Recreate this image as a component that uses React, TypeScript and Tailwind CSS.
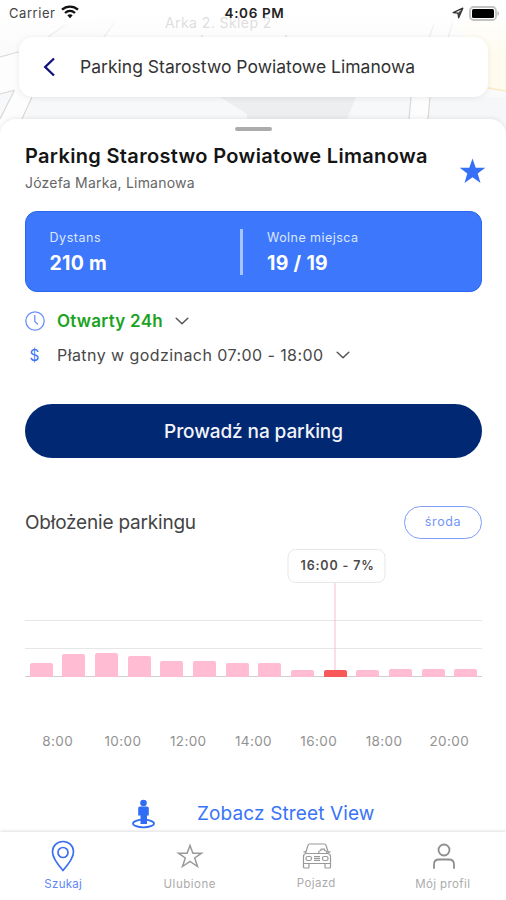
import React from "react";

const bars = [14, 23, 24.5, 21, 16, 16, 14.5, 14.5, 7, 7, 7.5, 8, 8, 8];
const hours = ["8:00", "10:00", "12:00", "14:00", "16:00", "18:00", "20:00"];
const ACTIVE_BAR = 9;

function MapBackdrop() {
  return (
    <svg className="absolute inset-0 h-full w-full" viewBox="0 0 506 140" preserveAspectRatio="none">
      <defs>
        <linearGradient id="fade" x1="0" y1="0" x2="0" y2="1">
          <stop offset="0" stopColor="#fff" stopOpacity="1" />
          <stop offset="0.14" stopColor="#fff" stopOpacity="0.85" />
          <stop offset="0.4" stopColor="#fff" stopOpacity="0" />
        </linearGradient>
      </defs>
      <rect width="506" height="140" fill="#fafafa" />
      <path d="M0 57L45 40L70 22L120 18L105 37L60 60L0 90Z" fill="#f7f7f7" />
      <path d="M0 57L22 51V90L0 95Z" fill="#fdfdfd" />
      <path d="M15 90L32 97L23 140H0V119Z" fill="#fdfdfd" />
      <path d="M0 94L15 90L0 119Z" fill="#f6f8f9" />
      <path d="M32 97H220L247 114V140H18Z" fill="#f6f8fa" />
      <path d="M220 97H356L347 122H247V114Z" fill="#eceef0" />
      <path d="M356 97H411L409 140H342L347 119Z" fill="#f6f8fa" />
      <path d="M430 97H506V140H426Z" fill="#f5f7f9" />
      <path d="M455 20H506V91L486 89Z" fill="#fffbee" />
      <path d="M488 88L506 91" stroke="#fbe9c4" strokeWidth="1.5" />
      <path d="M411 97H430L428 122H409Z" fill="#fdfdfd" />
      <path d="M0 57L22 51M48 37L65 25M104 37L115 22M0 94L15 90M14 91L0 119M32 97L22 119" stroke="#d8d8d8" strokeWidth="1.2" fill="none" />
      <path d="M411 97L409 119M430 97L428 119M434 24L429 38M453 22L448 38" stroke="#d8d8da" strokeWidth="1.2" fill="none" />
      <path d="M201 36H203M285 36H287" stroke="#aaa" strokeWidth="1" />
      <rect width="506" height="140" fill="url(#fade)" />
    </svg>
  );
}

function StatusBar() {
  return (
    <div className="relative flex h-[27px] items-center justify-between pr-[6px] pl-[9px]">
      <div className="flex w-[160px] items-center gap-[6px]">
        <span className="text-[13px] tracking-[0.55px] text-[#444]">Carrier</span>
        <svg className="-mt-[3px] h-[14px] w-[18px]" viewBox="0 0 18 14" fill="none" stroke="#111" strokeWidth="2.300">
          <path d="M1 4.700C5.500 .500 12.500 .500 17 4.700" />
          <path d="M4 8C7 5.300 11 5.300 14 8" />
          <path d="M6.300 10.300C8 9 10 9 11.700 10.300L9 13.300Z" fill="#111" stroke="none" />
        </svg>
      </div>
      <span className="text-[13.500px] font-semibold tracking-[0.65px] text-[#222]">4:06 PM</span>
      <div className="flex w-[160px] items-center justify-end gap-[5px]">
        <svg className="-mt-[2px] h-[12px] w-[12px]" viewBox="0 0 12 12">
          <path d="M1.200 5.600L10.800 1.200L6.700 10.800L5.900 6.200Z" fill="none" stroke="#333" strokeWidth="1.300" strokeLinejoin="round" />
          <path d="M6 6L10.800 1.200L6.700 10.800Z" fill="#444" />
        </svg>
        <svg className="-mt-[1px] h-[15px] w-[31px]" viewBox="0 0 31 15">
          <rect x="1" y="1" width="26" height="13" rx="3.500" fill="#fff" stroke="#c2c2c2" strokeWidth="1.800" />
          <rect x="3" y="3" width="22" height="9" rx="1.500" fill="#000" />
          <path d="M28.500 5V10C30.500 9 30.500 6 28.500 5Z" fill="#b5b5b5" />
        </svg>
      </div>
    </div>
  );
}

function Chevron({ className }: { className: string }) {
  return (
    <svg className={className} viewBox="0 0 14 8" fill="none" stroke="#555" strokeWidth="1.500" strokeLinecap="round" strokeLinejoin="round">
      <path d="M1.200 1.200L7 6.700L12.800 1.200" />
    </svg>
  );
}

function Chart() {
  return (
    <div className="mt-[81px]">
      <div className="relative h-[57px]">
        <div className="absolute inset-x-0 top-0 h-px bg-[#e6e6e6]" />
        <div className="absolute inset-x-0 top-[28px] h-px bg-[#e6e6e6]" />
        <div className="absolute inset-x-0 bottom-0 h-px bg-[#cfcfcf]" />
        <div className="relative flex h-full items-end">
          {bars.map((height, i) => (
            <div key={i} className="relative flex flex-1 items-end justify-center">
              {i === ACTIVE_BAR && (
                <div className="absolute bottom-0 left-1/2 flex -translate-x-1/2 flex-col items-center">
                  <div className="ml-[3px] flex h-[34px] w-[98px] items-center justify-center rounded-[8px] border-[1.5px] border-[#e7e7e7] bg-white pt-px pl-[2px] text-[12.5px] font-semibold tracking-[0.85px] whitespace-nowrap text-[#4a4a4a]">
                    16:00 - 7%
                  </div>
                  <div className="h-[94px] w-[1.5px] bg-[#fbbdd0]" />
                </div>
              )}
              <div
                className={`relative w-[23px] rounded-t-[2px] ${i === ACTIVE_BAR ? "bg-[#f9585b]" : "bg-[#ffbcd2]"}`}
                style={{ height }}
              />
            </div>
          ))}
        </div>
      </div>
      <div className="mt-[54px] flex h-[20px] items-center">
        {hours.map((hour) => (
          <span key={hour} className="flex-1 text-center text-[13.500px] tracking-[0.4px] text-[#929292]">{hour}</span>
        ))}
      </div>
    </div>
  );
}

function PinIcon() {
  return (
    <svg className="h-[32px] w-[26px]" viewBox="0 0 26 32" fill="none" stroke="#3c70f2" strokeWidth="1.700">
      <path d="M13 30.500C9 26 2.500 18 2.500 11.800C2.500 5.900 7.200 1.500 13 1.500S23.500 5.900 23.500 11.800C23.500 18 17 26 13 30.500Z" strokeLinejoin="round" />
      <circle cx="13" cy="12.500" r="5" />
    </svg>
  );
}

function StarIcon() {
  return (
    <svg className="h-[26px] w-[28px]" viewBox="0 0 28 26" fill="none" stroke="#999" strokeWidth="1.500">
      <path d="M14 2.500L16.900 10.200H25.500L18.700 15L21.500 23.500L14 18.400L6.500 23.500L9.300 15L2.500 10.200H11.100Z" />
    </svg>
  );
}

function CarIcon() {
  return (
    <svg className="ml-[2px] h-[28px] w-[30px]" viewBox="0 0 30 28" fill="none" stroke="#999" strokeWidth="1.200" strokeLinejoin="round">
      <path d="M3.500 11.500L6 3.200Q6.400 2 7.600 2H22.400Q23.600 2 24 3.200L26.500 11.500" />
      <path d="M1.500 21.500V14.500Q1.500 11.500 4.500 11.500H25.500Q28.500 11.500 28.500 14.500V21.500Z" />
      <path d="M1.500 9.800H4M26 9.800H28.500M1.500 21.500V25Q1.500 26 2.500 26H6Q7 26 7 25V21.500M23 21.500V25Q23 26 24 26H27.500Q28.500 26 28.500 25V21.500" />
      <rect x="4" y="14.500" width="5.500" height="4" rx="1.800" />
      <rect x="20.500" y="14.500" width="5.500" height="4" rx="1.800" />
      <path d="M12 14.700H18M12 16.500H18M12 18.300H18M16.500 11.500C16.500 9.500 18 8.500 19 8.500V7.200H22.500V8.500C24 8.500 25 9.500 25 11.500" />
    </svg>
  );
}

function ProfileIcon() {
  return (
    <svg className="ml-[2px] h-[28px] w-[26px]" viewBox="0 0 26 28" fill="none" stroke="#8e8e8e" strokeWidth="1.800" strokeLinecap="round">
      <circle cx="13" cy="8" r="5.500" />
      <path d="M3 26V22.500Q3 17.500 8 17.500H18Q23 17.500 23 22.500V26" />
    </svg>
  );
}

const tabs = [
  { label: "Szukaj", icon: <PinIcon />, style: "text-[#5d86f8] tracking-[0.3px]" },
  { label: "Ulubione", icon: <StarIcon />, style: "text-[#ababab] tracking-[0.5px]" },
  { label: "Pojazd", icon: <CarIcon />, style: "relative -top-px text-[#ababab] tracking-[0.4px]" },
  { label: "Mój profil", icon: <ProfileIcon />, style: "text-[#ababab] tracking-[0.4px]" },
];

export default function App() {
  return (
    <div className="relative flex h-[900px] w-[506px] flex-col overflow-hidden bg-white font-['Inter','Liberation_Sans',sans-serif]">
      <div className="absolute inset-x-0 top-0 h-[140px]">
        <MapBackdrop />
        <span className="absolute top-[12px] left-[165px] text-[14px] tracking-[0.42px] whitespace-nowrap text-[#dedede]">Arka 2. Sklep 2</span>
      </div>
      <StatusBar />
      <header className="relative mt-[10px] mr-[18px] ml-[19px] flex h-[60px] shrink-0 items-center rounded-[14px] bg-white shadow-[0_1px_6px_rgba(0,0,0,0.08)]">
        <svg className="ml-[24px] h-[20px] w-[13px]" viewBox="0 0 13 20" fill="none" stroke="#10107c" strokeWidth="2.300">
          <path d="M11 1.500L2.200 10L11 18.500" />
        </svg>
        <span className="ml-[24px] text-[17.500px] tracking-[0.02px] whitespace-nowrap text-[#333]">Parking Starostwo Powiatowe Limanowa</span>
      </header>

      <main className="relative mt-[22px] flex h-[713px] shrink-0 flex-col rounded-t-[16px] bg-white pr-[24px] pl-[25px] shadow-[0_-1px_4px_rgba(0,0,0,0.08)]">
        <div className="mt-[8px] h-[4px] w-[37px] shrink-0 self-center rounded-full bg-[#acacac]" />
        <div className="mt-[13px] flex h-[50px] shrink-0 justify-between">
          <div>
            <h1 className="h-[24px] text-[20px] leading-[24px] font-semibold tracking-[0.33px] whitespace-nowrap text-[#151515]">Parking Starostwo Powiatowe Limanowa</h1>
            <p className="mt-[5px] h-[20px] text-[14px] leading-[20px] tracking-[0.2px] text-[#666]">Józefa Marka, Limanowa</p>
          </div>
          <svg className="mt-[14px] mr-[-4px] h-[26px] w-[27px]" viewBox="0 0 27 26" fill="#3570f6">
            <path d="M13.500 0.500L16.700 9.700H26.300L18.700 15.500L21.500 25L13.500 19.300L5.500 25L8.300 15.500L0.700 9.700H10.300Z" />
          </svg>
        </div>

        <section className="mt-[17px] flex h-[81px] shrink-0 items-center rounded-[12px] border border-[#2b66f3] bg-[#3d77fb] pl-[23.500px] text-white">
          <div className="w-[190.500px] pt-px">
            <div className="text-[12.500px] leading-[18px] tracking-[0.55px] text-[#dce7ff]">Dystans</div>
            <div className="mt-[3px] text-[19.500px] leading-[26px] font-bold tracking-[0.25px]">210 m</div>
          </div>
          <div className="h-[46px] w-[3px] bg-[#a9c3fd]" />
          <div className="ml-[24px] pt-px">
            <div className="text-[12.500px] leading-[18px] tracking-[0.45px] text-[#dce7ff]">Wolne miejsca</div>
            <div className="mt-[3px] text-[19.500px] leading-[26px] font-bold tracking-[0.3px]">19 / 19</div>
          </div>
        </section>

        <div className="mt-[17px] flex h-[24px] shrink-0 items-center">
          <svg className="h-[20px] w-[20px]" viewBox="0 0 20 20" fill="none" stroke="#6b93f8" strokeWidth="1.300">
            <circle cx="10" cy="10" r="9.200" />
            <path d="M9.800 4V10.500L13 13.500" />
          </svg>
          <span className="ml-[12px] pt-px text-[17px] font-semibold tracking-[0.25px] text-[#1ba31f]">Otwarty 24h</span>
          <Chevron className="ml-[12px] h-[8px] w-[14px]" />
        </div>
        <div className="mt-[10px] flex h-[24px] shrink-0 items-center">
          <span className="w-[19px] pt-px text-center text-[15.500px] text-[#3b74f7]">$</span>
          <span className="ml-[13px] text-[16px] tracking-[0.43px] whitespace-nowrap text-[#484848]">Płatny w godzinach 07:00 - 18:00</span>
          <Chevron className="ml-[12px] h-[8px] w-[14px]" />
        </div>

        <button className="mt-[37px] h-[54px] shrink-0 rounded-full bg-[#002873] pt-[2px] text-[19px] font-medium tracking-[-0.1px] text-[#f2f4fa]">Prowadź na parking</button>

        <div className="mt-[48px] flex h-[33px] shrink-0 items-center justify-between">
          <h2 className="pt-px text-[19px] tracking-[-0.2px] text-[#444]">Obłożenie parkingu</h2>
          <button className="-mt-px h-[33px] w-[78px] rounded-full border-[1.5px] border-[#809cf8] pt-px text-[12.500px] tracking-[0.6px] text-[#7195f8]">środa</button>
        </div>
        <Chart />
        <a className="mt-[47px] flex h-[32px] items-center pl-[106px]">
          <svg className="h-[30px] w-[25px]" viewBox="0 0 25 30">
            <ellipse cx="12.500" cy="24.500" rx="10.500" ry="3.800" fill="none" stroke="#316df4" strokeWidth="1.800" />
            <circle cx="12.500" cy="4" r="3.300" fill="#316df4" />
            <path d="M7.200 9Q7.200 7.500 9 7.500H16Q17.800 7.500 17.800 9V16.500H16V25H9.500V16.500H7.200Z" fill="#316df4" />
          </svg>
          <span className="ml-[41px] text-[19px] tracking-[0.13px] text-[#3974f8]">Zobacz Street View</span>
        </a>
      </main>

      <nav className="relative flex flex-1 bg-white shadow-[0_-1px_3px_rgba(0,0,0,0.13)]">
        {tabs.map(({ label, icon, style }) => (
          <div key={label} className="flex flex-1 flex-col items-center pt-[8px]">
            <div className="flex h-[32px] items-center">{icon}</div>
            <span className={`mt-[3px] text-[11.500px] leading-[18px] ${style}`}>{label}</span>
          </div>
        ))}
      </nav>
    </div>
  );
}
